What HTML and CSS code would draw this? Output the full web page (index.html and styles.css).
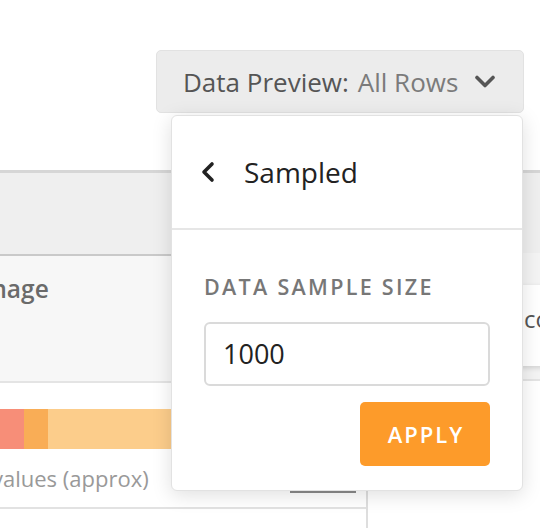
FILE: index.html
```html
<!DOCTYPE html>
<html>
<head>
<meta charset="utf-8">
<link rel="stylesheet" href="styles.css">
</head>
<body>
<div class="toolbar">
  <button class="preview-btn">
    <span class="pv-label">Data Preview:</span><span class="pv-value">All Rows</span>
    <svg class="chev-down" width="22" height="13" viewBox="0 0 22 13"><path d="M3 2.5 L11 10.5 L19 2.5" fill="none" stroke="#555" stroke-width="3.6" stroke-linecap="round" stroke-linejoin="round"/></svg>
  </button>
</div>

<div class="table">
  <div class="col col-a">
    <div class="col-head"></div>
    <div class="col-name"><span class="name-text">Image</span></div>
    <div class="col-body">
      <div class="bar">
        <span class="seg seg-1"></span><span class="seg seg-2"></span><span class="seg seg-3"></span>
      </div>
      <div class="stat-row">
        <span class="stat-text">Distinct values (approx)</span>
        <span class="stat-line"></span>
      </div>
    </div>
  </div>
  <div class="col col-b">
    <div class="col-head col-head-b"></div>
    <div class="col-name col-name-b">
      <div class="name-card">Record count</div>
    </div>
    <div class="col-body-b"></div>
  </div>
</div>

<div class="panel">
  <div class="panel-head">
    <svg class="chev-left" width="14" height="22" viewBox="0 0 14 22"><path d="M11 3 L3 11 L11 19" fill="none" stroke="#222" stroke-width="3.6" stroke-linecap="round" stroke-linejoin="round"/></svg>
    <span class="panel-title">Sampled</span>
  </div>
  <div class="panel-body">
    <div class="field-label">DATA SAMPLE SIZE</div>
    <div class="field-input">1000</div>
    <div class="actions">
      <button class="apply-btn">APPLY</button>
    </div>
  </div>
</div>
</body>
</html>
```

FILE: styles.css
```css
html, body {
  margin: 0;
  padding: 0;
}
body {
  width: 540px;
  height: 528px;
  overflow: hidden;
  position: relative;
  background: #ffffff;
  font-family: "Open Sans", "DejaVu Sans", sans-serif;
}

/* toolbar */
.toolbar {
  display: flex;
  justify-content: flex-end;
  padding: 50px 16px 0 0;
}
.preview-btn {
  box-sizing: border-box;
  width: 368px;
  height: 63px;
  display: flex;
  align-items: center;
  padding: 0 27px 0 26px;
  margin: 0;
  background: #ececec;
  border: 1px solid #e2e2e2;
  border-radius: 5px;
  font-family: inherit;
  font-size: 26px;
  line-height: 34px;
  color: #555;
}
.pv-label { color: #555; }
.pv-value { color: #7b7b7b; margin-left: 9px; }
.chev-down { margin-left: auto; display: block; }

/* background table */
.table {
  margin-top: 57px;
  margin-left: -100px;
  display: grid;
  grid-template-columns: 468px 220px;
}
.col-a {
  border-right: 2px solid #dedede;
}
.col-head {
  height: 81px;
  background: #efefef;
  border-top: 3px solid #d6d6d6;
  border-bottom: 2px solid #c9c9c9;
}
.col-name {
  box-sizing: border-box;
  height: 127px;
  background: #f7f7f7;
  border-bottom: 2px solid #e4e4e4;
  padding: 16px 0 0 76px;
  font-size: 24.5px;
  line-height: 34px;
  font-weight: 600;
  color: #6a6a6a;
}
.col-body {
  background: #fff;
  padding: 26px 10px 0 9px;
  border-bottom: 2px solid #e2e2e2;
}
.bar {
  display: flex;
  height: 40px;
}
.seg { display: block; height: 100%; }
.seg-1 { width: 115px; background: #f78e78; }
.seg-2 { width: 24px; background: #f9ad56; }
.seg-3 { flex: 1; background: #fccd8b; }
.stat-row {
  display: flex;
  align-items: flex-end;
  margin-top: 14px;
  padding-bottom: 14px;
}
.stat-text {
  font-size: 22px;
  line-height: 30px;
  color: #999;
}
.stat-line {
  margin-left: auto;
  width: 66px;
  height: 2px;
  background: #8a8a8a;
}

.col-head-b {
  height: 80px;
  border-bottom: 0;
}
.col-name-b {
  height: 128px;
  background: #f4f4f4;
  padding: 32px 0 0 16px;
  font-weight: 400;
}
.name-card {
  box-sizing: border-box;
  height: 81px;
  background: #fff;
  box-shadow: 0 2px 5px rgba(0,0,0,0.14);
  padding: 18px 0 0 55px;
  font-size: 24px;
  line-height: 32px;
  color: #555;
  white-space: nowrap;
}
.col-body-b {
  height: 200px;
  background: #fff;
}

/* dropdown panel (overlay) */
.panel {
  position: absolute;
  top: 115px;
  left: 171px;
  width: 352px;
  box-sizing: border-box;
  background: #fff;
  border: 1px solid #e2e2e2;
  border-radius: 6px;
  box-shadow: 0 4px 20px rgba(0,0,0,0.13);
}
.panel-head {
  height: 112px;
  display: flex;
  align-items: center;
  padding-left: 29px;
  border-bottom: 2px solid #e6e6e6;
}
.chev-left { display: block; }
.panel-title {
  margin-left: 29px;
  font-size: 28px;
  line-height: 34px;
  color: #222;
}
.panel-body {
  padding: 42px 32px 24px 32px;
}
.field-label {
  font-size: 21.5px;
  line-height: 30px;
  font-weight: 600;
  letter-spacing: 2.3px;
  color: #777;
}
.field-input {
  box-sizing: border-box;
  margin-top: 20px;
  height: 64px;
  border: 2px solid #dadada;
  border-radius: 6px;
  padding-left: 17px;
  font-size: 27px;
  line-height: 60px;
  color: #222;
}
.actions {
  display: flex;
  justify-content: flex-end;
  margin-top: 16px;
}
.apply-btn {
  width: 130px;
  height: 64px;
  margin: 0;
  border: 0;
  border-radius: 5px;
  background: #fd9b2a;
  color: #fff;
  font-family: inherit;
  font-size: 22px;
  font-weight: 600;
  letter-spacing: 2px;
  padding: 0 0 0 2px;
}
```
